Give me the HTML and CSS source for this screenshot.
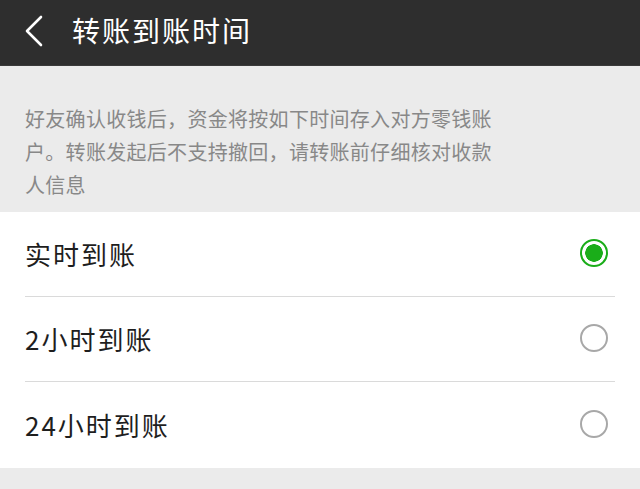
FILE: index.html
```html
<!DOCTYPE html>
<html lang="zh-CN">
<head>
<meta charset="utf-8">
<title>转账到账时间</title>
<link rel="stylesheet" href="styles.css">
</head>
<body>
<header class="topbar">
  <svg class="back" width="20" height="32" viewBox="0 0 20 32"><path d="M17 2 L3 16 L17 30" fill="none" stroke="#ffffff" stroke-width="2.6" stroke-linecap="round" stroke-linejoin="round"/></svg>
  <h1 class="title">转账到账时间</h1>
</header>
<p class="desc">好友确认收钱后，资金将按如下时间存入对方零钱账户。转账发起后不支持撤回，请转账前仔细核对收款人信息</p>
<ul class="options">
  <li class="option"><span class="label">实时到账</span><span class="radio radio-on"></span></li>
  <li class="option"><span class="label">2小时到账</span><span class="radio"></span></li>
  <li class="option"><span class="label">24小时到账</span><span class="radio"></span></li>
</ul>
</body>
</html>
```

FILE: styles.css
```css
* { box-sizing: border-box; }
html, body { margin: 0; padding: 0; }
body {
  width: 640px;
  height: 489px;
  overflow: hidden;
  background: #ebebeb;
  font-family: "Noto Sans CJK SC", "Noto Sans", sans-serif;
}
.topbar {
  height: 66px;
  background: #2e2e2e;
  display: flex;
  align-items: center;
  padding-left: 24px;
  border-bottom: 1px solid #3a3a3a;
}
.back { display: block; margin-top: -4px; }
.title {
  margin: -6px 0 0 28px;
  color: #ffffff;
  font-size: 28px;
  font-weight: 400;
  letter-spacing: 2px;
  line-height: 1;
}
.desc {
  margin: 0;
  padding: 36px 0 11px 25px;
  width: 500px;
  color: #888888;
  font-size: 20px;
  letter-spacing: 0.3px;
  line-height: 33px;
}
.options {
  list-style: none;
  margin: 0;
  padding: 0;
  background: #ffffff;
}
.option {
  height: 85px;
  margin: 0 25px;
  display: flex;
  align-items: center;
  justify-content: space-between;
  border-bottom: 1px solid #dadada;
  font-size: 26px;
  letter-spacing: 2px;
  color: #1e1e1e;
}
.option:last-child { border-bottom: none; height: 86px; }
.label { margin-top: -2px; }
.radio {
  width: 28px;
  height: 28px;
  border-radius: 50%;
  border: 2px solid #a8a8a8;
  margin-right: 7px;
  margin-top: -3px;
  display: block;
}
.radio-on {
  border-color: #1aad19;
  background: radial-gradient(circle, #1aad19 0 8.5px, #ffffff 9px);
}
```
